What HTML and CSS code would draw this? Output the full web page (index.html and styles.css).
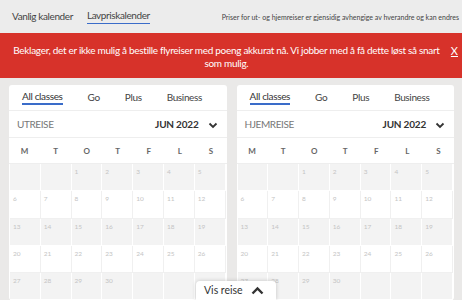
FILE: index.html
```html
<!DOCTYPE html>
<html lang="no">
<head>
  <meta charset="UTF-8" />
  <meta name="viewport" content="width=device-width, initial-scale=1.0" />
  <title>Lavpriskalender</title>
  <link rel="stylesheet" href="styles.css">
</head>
<body>

  <div class="topbar">
    <a class="nav-link" href="#">Vanlig kalender</a>
    <a class="nav-link active" href="#">Lavpriskalender</a>
    <span class="note">Priser for ut- og hjemreiser er gjensidig avhengige av hverandre og kan endres</span>
  </div>

  <!-- Feilmelding -->
  <div class="banner">
    <p class="banner-text">Beklager, det er ikke mulig å bestille flyreiser med poeng akkurat nå. Vi jobber med å få dette løst så snart som mulig.</p>
    <a class="banner-close" href="#">X</a>
  </div>

  <div class="calendars">
    <div class="card" id="utreise"></div>
    <div class="card" id="hjemreise"></div>
  </div>

  <button class="vis-reise">
    Vis reise
    <svg width="13" height="9" viewBox="0 0 13 9"><polyline points="1.5,7.5 6.5,2.5 11.5,7.5" fill="none" stroke="#333" stroke-width="2.4"/></svg>
  </button>

  <script>
    const klasser = ['All classes', 'Go', 'Plus', 'Business'];
    const ukedager = ['M', 'T', 'O', 'T', 'F', 'L', 'S'];

    function lagKalender(el, tittel) {
      let tabs = klasser.map((k, i) =>
        `<span class="tab${i === 0 ? ' active' : ''}">${k}</span>`).join('');

      let dager = ukedager.map(d => `<span>${d}</span>`).join('');

      // juni 2022 starter på en onsdag
      let celler = '';
      for (let i = 0; i < 35; i++) {
        const dag = i - 1;
        const uke = Math.floor(i / 7);
        const tekst = dag >= 1 && dag <= 30 ? dag : '';
        celler += `<div class="cell ${uke % 2 === 0 ? 'shade' : ''}">${tekst}</div>`;
      }

      el.innerHTML = `
        <div class="tabs">${tabs}</div>
        <div class="month-row">
          <span class="trip">${tittel}</span>
          <span class="month">JUN 2022</span>
          <svg class="chevron" width="10" height="7" viewBox="0 0 10 7"><polyline points="1.5,1.5 5,5 8.5,1.5" fill="none" stroke="#333" stroke-width="1.8"/></svg>
        </div>
        <div class="weekdays">${dager}</div>
        <div class="days">${celler}</div>
      `;
    }

    lagKalender(document.getElementById('utreise'), 'UTREISE');
    lagKalender(document.getElementById('hjemreise'), 'HJEMREISE');
  </script>
</body>
</html>
```

FILE: styles.css
```css
body {
  font-family: 'Lato', 'Liberation Sans', sans-serif;
  background-color: #eae9e8;
  margin: 0;
  padding: 0;
  color: #333;
  height: 300px;
  overflow: hidden;
}

.topbar {
  display: flex;
  align-items: center;
  height: 33px;
  padding: 0 3px 0 12px;
  background-color: #ececec;
}

.nav-link {
  font-size: 10px;
  letter-spacing: -0.4px;
  color: #444;
  text-decoration: none;
  margin-right: 14px;
  padding-bottom: 2px;
  white-space: nowrap;
}

.nav-link.active {
  border-bottom: 1px solid #3a6cc9;
}

.note {
  margin-left: auto;
  font-size: 7px;
  color: #444;
  white-space: nowrap;
}

.banner {
  display: flex;
  align-items: flex-start;
  background-color: #d7322a;
  color: white;
  height: 45px;
  box-sizing: border-box;
  padding: 11px 4px 0 10px;
}

.banner-text {
  flex: 1;
  margin: 0;
  font-size: 10px;
  letter-spacing: -0.3px;
  line-height: 13px;
  text-align: center;
}

.banner-close {
  color: white;
  font-size: 11px;
  margin-left: 8px;
  text-decoration: underline;
}

.calendars {
  display: grid;
  grid-template-columns: 1fr 1fr;
  gap: 10px;
  padding: 7px 8px 0 9px;
}

.card {
  background-color: #fff;
  border-radius: 3px;
}

.tabs {
  display: flex;
  align-items: center;
  gap: 25px;
  height: 25px;
  padding: 0 13px;
  border-bottom: 1px solid #eee;
}

.tab {
  font-size: 10px;
  letter-spacing: -0.35px;
  color: #444;
  padding-bottom: 1px;
  white-space: nowrap;
}

.tab.active {
  color: #333;
  border-bottom: 2px solid #3a6cc9;
}

.month-row {
  display: flex;
  align-items: center;
  height: 26px;
  padding: 0 9px 0 8px;
  border-bottom: 1px solid #eee;
}

.trip {
  font-size: 10px;
  letter-spacing: -0.4px;
  color: #777;
}

.month {
  margin-left: auto;
  font-size: 10px;
  letter-spacing: -0.2px;
  font-weight: bold;
  color: #333;
}

.chevron {
  margin-left: 9px;
  margin-top: 3px;
}

.weekdays {
  display: grid;
  grid-template-columns: repeat(7, 1fr);
  height: 25px;
  align-items: center;
  text-align: center;
  font-size: 8px;
  font-weight: bold;
  color: #666;
  border-bottom: 1px solid #eee;
}

.days {
  display: grid;
  grid-template-columns: repeat(7, 1fr);
  grid-auto-rows: 27.3px;
  padding: 0 1px;
}

.cell {
  font-size: 6.5px;
  color: #c4c4c4;
  padding: 4px 3px;
  border: 1px solid #f0f0f0;
  border-width: 0 1px 1px 0;
}

.cell.shade {
  background-color: #f3f3f3;
  border-color: #fff;
}

.vis-reise {
  position: absolute;
  left: 196px;
  top: 281px;
  width: 80px;
  height: 19px;
  display: flex;
  align-items: flex-start;
  gap: 8px;
  padding: 3px 0 0 8px;
  border: none;
  border-radius: 4px 4px 0 0;
  background-color: #fff;
  box-shadow: 0 0 4px rgba(0,0,0,0.2);
  font-family: 'Lato', 'Liberation Sans', sans-serif;
  font-size: 10.5px;
  color: #333;
}

.vis-reise svg {
  margin-top: 2px;
}
```
